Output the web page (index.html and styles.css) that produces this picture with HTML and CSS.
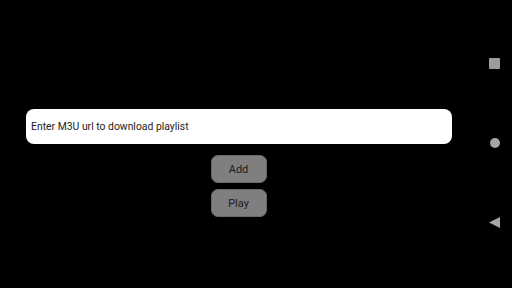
FILE: index.html
```html
<!DOCTYPE html>
<html>
<head>
<meta charset="utf-8">
<link rel="stylesheet" href="styles.css">
</head>
<body>
<div class="screen">
  <main class="main">
    <div class="url-input">Enter M3U url to download playlist</div>
    <div class="btn btn-add">Add</div>
    <div class="btn btn-play">Play</div>
  </main>
  <nav class="navbar">
    <span class="nav-square"></span>
    <span class="nav-circle"></span>
    <svg class="nav-back" width="12" height="12" viewBox="0 0 12 12"><polygon points="0,5.5 11,0 11,11" fill="#a6a6a6"/></svg>
  </nav>
</div>
</body>
</html>
```
FILE: styles.css
```css
html, body {
  margin: 0;
  padding: 0;
  background: #000;
  width: 512px;
  height: 288px;
  overflow: hidden;
  font-family: Roboto, "Liberation Sans", sans-serif;
}
.screen {
  display: flex;
  width: 512px;
  height: 288px;
}
.main {
  flex: 0 0 477px;
  display: flex;
  flex-direction: column;
  align-items: center;
  padding-top: 109px;
  box-sizing: border-box;
  background: #000;
}
.url-input {
  width: 426px;
  height: 35px;
  box-sizing: border-box;
  background: #fff;
  border-radius: 8px;
  color: #222;
  font-size: 10.4px;
  line-height: 35px;
  padding-left: 5px;
  margin-left: 1px;
}
.btn {
  width: 56px;
  height: 28px;
  box-sizing: border-box;
  background: #7f7f7f;
  border: 1px solid #6a6a6a;
  border-radius: 7px;
  color: #1c1c1c;
  font-size: 11px;
  display: flex;
  align-items: center;
  justify-content: center;
}
.btn-add {
  margin-top: 11px;
}
.btn-play {
  margin-top: 6px;
}
.navbar {
  flex: 1;
  background: #000;
  display: flex;
  flex-direction: column;
  align-items: center;
  justify-content: space-between;
  padding: 58px 0 59px 0;
  box-sizing: border-box;
}
.nav-square {
  width: 11px;
  height: 11px;
  background: #9c9c9c;
  border-radius: 1px;
}
.nav-circle {
  width: 10px;
  height: 10px;
  border-radius: 50%;
  background: #a6a6a6;
}
.nav-back {
  display: block;
}
```
